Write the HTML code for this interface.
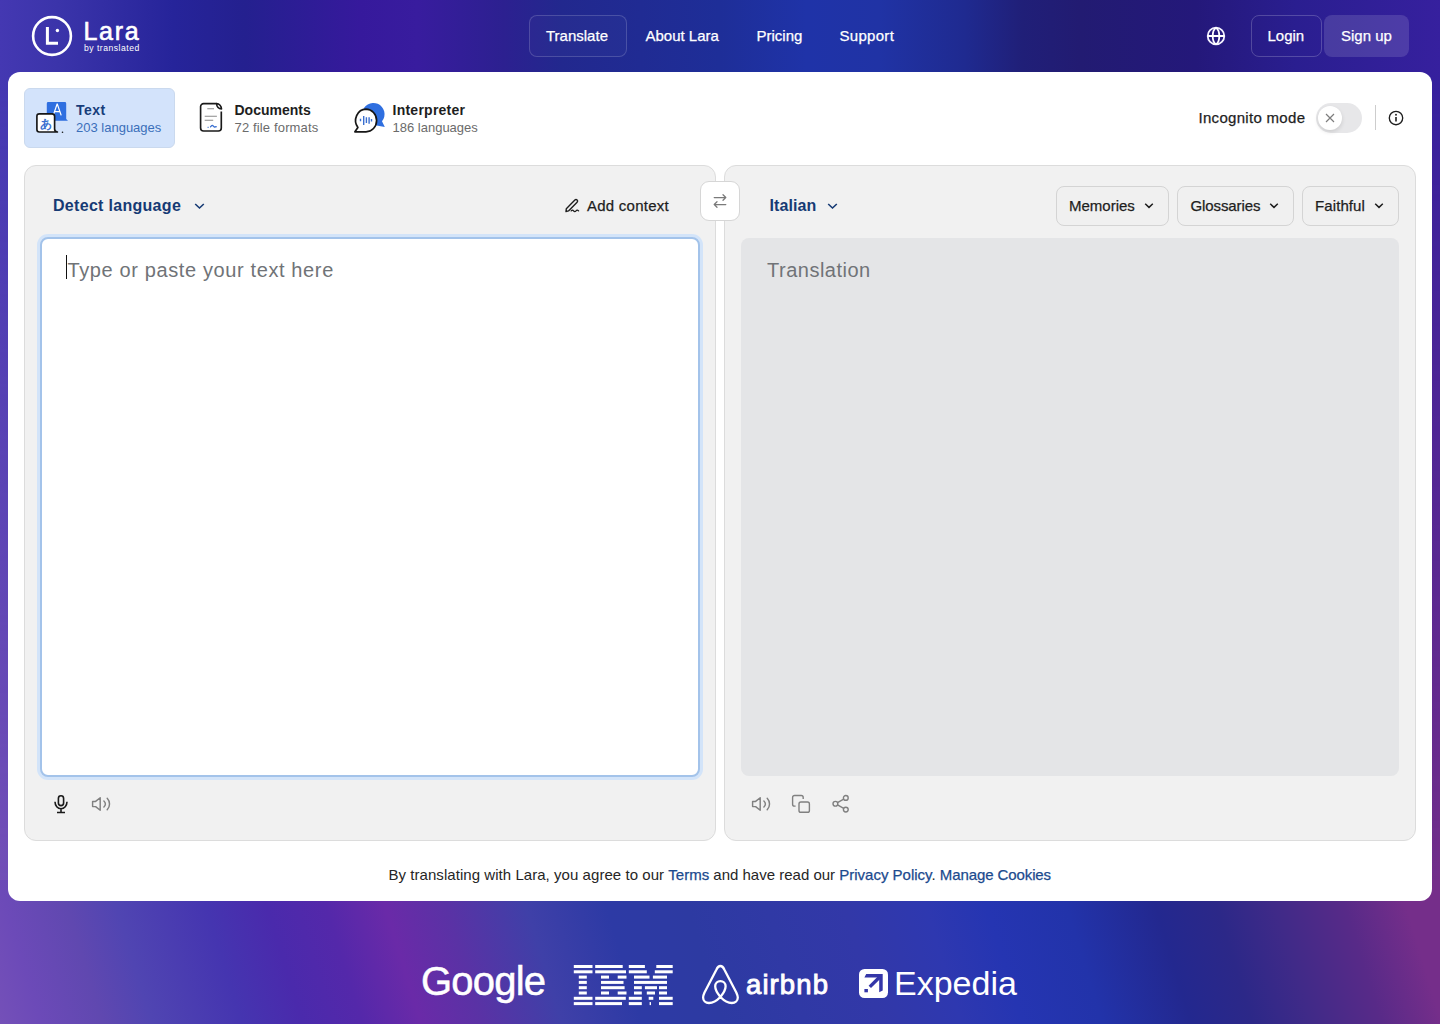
<!DOCTYPE html>
<html><head><meta charset="utf-8">
<style>
*{box-sizing:border-box;margin:0;padding:0}
html,body{width:1440px;height:1024px;overflow:hidden}
body{font-family:"Liberation Sans",sans-serif;position:relative;background:#3a2aa8}
.abs{position:absolute}
.t{position:absolute;white-space:nowrap;line-height:1}
.w{color:#fff}
.med{-webkit-text-stroke:0.25px currentColor}
.bgb{position:absolute;left:0;top:0;width:1440px;height:1024px;
 background:linear-gradient(90deg,#7450b8 0%,#6c4ab8 3%,#6048b0 7%,#5045b2 10%,#4535b0 17%,#4a2aac 21%,#5428aa 25%,#6a2aa8 29%,#5a32a5 33%,#3f40a8 39%,#2d3aa5 44%,#2d3aa2 50%,#3039a5 56%,#3238a8 61%,#2e38b0 67%,#2535b0 69%,#2235aa 75%,#23288f 81%,#342a8a 86%,#452a88 90%,#5a2a88 96%,#752e8a 100%)}
.bgt{position:absolute;left:0;top:0;width:1440px;height:1024px;
 background:linear-gradient(90deg,#4438b2 0%,#3b34aa 4%,#26249a 12%,#24208f 17%,#36199c 25%,#381c9e 29%,#2c2090 35%,#22288e 39%,#1e2e98 50%,#1f33a8 56%,#2033a5 61%,#1f2a90 67%,#201f78 71%,#221b72 75%,#24187a 83%,#2a1e90 90%,#36209e 100%);
 -webkit-mask-image:linear-gradient(180deg,#000 0px,#000 80px,rgba(0,0,0,0) 900px)}
.card{position:absolute;left:8px;top:72px;width:1424px;height:829px;background:#fff;border-radius:12px}
.panel{position:absolute;top:165px;width:692px;height:676px;background:#f1f1f1;border:1px solid #dcdcdc;border-radius:12px}
.btn{position:absolute;top:186px;height:40px;border:1px solid #d4d4d4;border-radius:8px;background:#f0f0f0}
.ic{position:absolute;overflow:visible}
</style></head>
<body>
<div class="bgb"></div>
<div class="bgt"></div>
<div style="position:absolute;left:0;top:880px;width:1440px;height:144px;background:linear-gradient(73deg,#7450b8 0.1%,#6c4ab8 2.8%,#6048b0 6.9%,#5045b2 10.3%,#4535b0 16.3%,#4a2aac 20.4%,#5428aa 24.4%,#6a2aa8 28.4%,#5a32a5 32.5%,#3f40a8 37.9%,#2d3aa5 43.3%,#2d3aa2 48.7%,#3039a5 54.1%,#3238a8 59.4%,#2e38b0 64.8%,#2535b2 68.9%,#2233aa 74.3%,#23288f 80.3%,#2c2888 84.4%,#402a88 88.4%,#582a88 93.1%,#752e8a 97.2%)"></div>

<!-- header -->
<svg class="ic" style="left:31px;top:15px" width="42" height="42" viewBox="0 0 42 42">
  <circle cx="21" cy="21" r="18.9" fill="none" stroke="#fff" stroke-width="2.6"/>
  <path d="M16.4 12v16.3h10.6" fill="none" stroke="#fff" stroke-width="3"/>
  <circle cx="26.4" cy="15.5" r="1.7" fill="#fff"/>
</svg>
<div class="t w" style="left:83.5px;top:19px;font-size:25px;letter-spacing:1.7px;-webkit-text-stroke:0.6px #fff">Lara</div>
<div class="t w" style="left:84px;top:43.5px;font-size:8.6px;letter-spacing:0.5px">by translated</div>

<div class="abs" style="left:529px;top:15px;width:98px;height:42px;border:1px solid rgba(255,255,255,0.17);border-radius:8px;background:rgba(255,255,255,0.02)"></div>
<div class="t w med" style="left:546px;top:28px;font-size:15px">Translate</div>
<div class="t w med" style="left:645.5px;top:28px;font-size:15px">About Lara</div>
<div class="t w med" style="left:756.5px;top:28px;font-size:15px">Pricing</div>
<div class="t w med" style="left:839.5px;top:28px;font-size:15px;letter-spacing:0.3px">Support</div>

<svg class="ic" style="left:1206px;top:26px" width="20" height="20" viewBox="0 0 20 20">
  <circle cx="10" cy="10" r="8.3" fill="none" stroke="#f4f2ff" stroke-width="1.8"/>
  <path d="M10 1.7C5.6 4.5 5.6 15.5 10 18.3M10 1.7C14.4 4.5 14.4 15.5 10 18.3M1.7 10h16.6" fill="none" stroke="#fff" stroke-width="1.8"/>
</svg>
<div class="abs" style="left:1251px;top:15px;width:71px;height:42px;border:1px solid rgba(255,255,255,0.2);border-radius:8px"></div>
<div class="t w med" style="left:1267.5px;top:28.4px;font-size:15px">Login</div>
<div class="abs" style="left:1324px;top:15px;width:85px;height:42px;border-radius:8px;background:rgba(255,255,255,0.13)"></div>
<div class="t w med" style="left:1341px;top:28.4px;font-size:15px">Sign up</div>

<!-- card -->
<div class="card"></div>

<!-- tabs -->
<div class="abs" style="left:24px;top:88px;width:151px;height:60px;border-radius:6px;background:#d3e3fb;border:1px solid #cad9ee"></div>
<svg class="ic" style="left:36px;top:102px" width="34" height="32" viewBox="0 0 34 32">
  <path d="M12.2 0h16.6a1.4 1.4 0 0 1 1.4 1.4v15.6l1.8 1.8H12.2a1.4 1.4 0 0 1-1.4-1.4V1.4A1.4 1.4 0 0 1 12.2 0z" fill="#2f6fe0"/>
  <path d="M17.2 13.4l3.9-11.3h0.2l3.9 11.3M18.5 9.7h5.4" fill="none" stroke="#fff" stroke-width="1.25"/>
  <path d="M3.4 11.8h12.7a2.5 2.5 0 0 1 2.5 2.5V27c0 1.5 1 2.6 2.8 3H3.4a2.5 2.5 0 0 1-2.5-2.5V14.3a2.5 2.5 0 0 1 2.5-2.5z" fill="#fff" stroke="#161616" stroke-width="1.65" stroke-linejoin="round"/>
  <circle cx="26.5" cy="30.3" r="0.8" fill="#161616"/>
  <text x="10.2" y="26.2" font-size="12" font-weight="700" fill="#3a6fd0" text-anchor="middle">あ</text>
</svg>
<div class="t" style="left:76px;top:102.8px;font-size:14px;font-weight:700;color:#173d7a;letter-spacing:0.5px">Text</div>
<div class="t" style="left:76px;top:120.9px;font-size:13px;color:#3b6fba">203 languages</div>

<svg class="ic" style="left:199px;top:102px" width="25" height="31" viewBox="0 0 25 31">
  <path d="M17.6 1.6H4.6a3 3 0 0 0-3 3V26a3 3 0 0 0 3 3h14.7a3 3 0 0 0 3-3V9.5" fill="none" stroke="#1a1a1a" stroke-width="1.65"/>
  <path d="M17.6 1.6c2.6 0 4.9 2.6 4.9 5.3-2.7 0-4.9-2.1-4.9-5.3z" fill="none" stroke="#1a1a1a" stroke-width="1.65" stroke-linejoin="round"/>
  <path d="M8.3 6.8h6.7M5.7 14.2h12.2M5.7 18.3h8.5" stroke="#8a8a8a" stroke-width="1.1"/>
  <path d="M8.6 25.3h1M11 25.2c1-0.2 1.4-1.9 2.3-1.9s1.2 1.7 2.1 1.7 1.2-0.6 2.3-0.1" fill="none" stroke="#3a6fd0" stroke-width="1.3"/>
</svg>
<div class="t" style="left:234.5px;top:102.8px;font-size:14px;font-weight:700;color:#1e1e1e">Documents</div>
<div class="t" style="left:234.5px;top:120.8px;font-size:13px;color:#6b6b6b;letter-spacing:0.15px">72 file formats</div>

<svg class="ic" style="left:353px;top:103px" width="34" height="31" viewBox="0 0 34 31">
  <path d="M29 18.3A11.2 11.2 0 1 0 22.3 22.2L31.8 24z" fill="#2f6fe0"/>
  <path d="M13 6.2a10.6 11.3 0 1 1 0 22.6H1.9l3-4.3A10.6 11.3 0 0 1 13 6.2z" fill="#fff" stroke="#161616" stroke-width="1.7" stroke-linejoin="round"/>
  <path d="M7.5 15.8v2.5M10.7 13.1v8.8M13.4 14.2v5.8M16.1 14.2v6.5M18.5 16.1v2.4" stroke="#3a6fd0" stroke-width="1.4"/>
</svg>
<div class="t" style="left:392.5px;top:102.8px;font-size:14px;font-weight:700;color:#1e1e1e;letter-spacing:0.25px">Interpreter</div>
<div class="t" style="left:392.5px;top:120.8px;font-size:13px;color:#6b6b6b">186 languages</div>

<!-- incognito -->
<div class="t med" style="left:1198.5px;top:110px;font-size:15px;color:#1e1e1e;letter-spacing:0.3px">Incognito mode</div>
<div class="abs" style="left:1316px;top:103px;width:46px;height:30px;border-radius:15px;background:#e7e7e9"></div>
<div class="abs" style="left:1318px;top:106px;width:24px;height:24px;border-radius:12px;background:#fff;box-shadow:0 2px 4px rgba(0,0,0,0.12)"></div>
<svg class="ic" style="left:1325px;top:113px" width="10" height="10" viewBox="0 0 10 10"><path d="M1 1l8 8M9 1l-8 8" stroke="#7d7d7d" stroke-width="1.15"/></svg>
<div class="abs" style="left:1374.5px;top:105px;width:1.6px;height:25px;background:#cdcdcd"></div>
<svg class="ic" style="left:1388px;top:110px" width="16" height="16" viewBox="0 0 16 16">
  <circle cx="8" cy="8" r="6.7" fill="none" stroke="#1e1e1e" stroke-width="1.35"/>
  <path d="M8 7v4.5" stroke="#1e1e1e" stroke-width="1.6"/><circle cx="8" cy="4.7" r="0.95" fill="#1e1e1e"/>
</svg>

<!-- panels -->
<div class="panel" style="left:24px"></div>
<div class="panel" style="left:724px"></div>

<div class="abs" style="left:700px;top:181px;width:40px;height:40px;border:1px solid #d6d6d6;border-radius:9px;background:#fff"></div>
<svg class="ic" style="left:712px;top:193px" width="16" height="16" viewBox="0 0 16 16">
  <path d="M2.2 4.5h11.6M11 1.7l2.8 2.8-2.8 2.8M13.8 11.5H2.2M5 8.7l-2.8 2.8 2.8 2.8" fill="none" stroke="#7a7a7a" stroke-width="1.25" stroke-linecap="round" stroke-linejoin="round"/>
</svg>

<div class="t" style="left:53px;top:198.1px;font-size:16px;font-weight:700;color:#163a74;letter-spacing:0.3px">Detect language</div>
<svg class="ic" style="left:193.5px;top:201.5px" width="11" height="8" viewBox="0 0 11 8"><path d="M1.2 2l4.3 4 4.3-4" fill="none" stroke="#163a74" stroke-width="1.6"/></svg>

<svg class="ic" style="left:564px;top:198px" width="16" height="15" viewBox="0 0 16 15">
  <path d="M2 13.5l0.3-2.8 8.6-8.6a1.5 1.5 0 0 1 2.2 2.2l-8.6 8.6z" fill="none" stroke="#1e1e1e" stroke-width="1.4" stroke-linejoin="round"/>
  <path d="M7.2 12.9c0.9-1.1 1.7-1.1 2.4-0.1s1.6 1 2.4 0 1.6-0.9 2.6 0.1" fill="none" stroke="#1e1e1e" stroke-width="1.3" stroke-linecap="round"/>
</svg>
<div class="t med" style="left:587px;top:198.05px;font-size:15px;color:#1e1e1e;letter-spacing:0.25px">Add context</div>

<div class="abs" style="left:40px;top:237px;width:660px;height:540px;background:#fff;border:2px solid #a3c3ea;border-radius:8px;box-shadow:0 0 0 3px #d3e4f9"></div>
<div class="abs" style="left:66px;top:255px;width:1.3px;height:24px;background:#111"></div>
<div class="t" style="left:67.5px;top:260px;font-size:20px;color:#707377;letter-spacing:0.62px">Type or paste your text here</div>

<svg class="ic" style="left:52px;top:794px" width="18" height="20" viewBox="0 0 18 20">
  <rect x="6.4" y="1.8" width="5.2" height="9.8" rx="2.6" fill="none" stroke="#1a1a1a" stroke-width="1.6"/>
  <path d="M3 7.8a6 6.9 0 0 0 12 0M9 14.7v3.6M5 18.5h8" fill="none" stroke="#1a1a1a" stroke-width="1.6"/>
</svg>
<svg class="ic" style="left:91px;top:796px" width="20" height="16" viewBox="0 0 20 16">
  <path d="M1.6 5.4h3l4.6-3.7v12.6l-4.6-3.7h-3z" fill="none" stroke="#808080" stroke-width="1.45" stroke-linejoin="round"/>
  <path d="M12.9 5c2 1.8 2 4.2 0 6M16.2 2.2c3.1 3.3 3.1 8.3 0 11.6" fill="none" stroke="#808080" stroke-width="1.45" stroke-linecap="round"/>
</svg>

<!-- right panel -->
<div class="t" style="left:769.5px;top:198.1px;font-size:16px;font-weight:700;color:#163a74;letter-spacing:0.1px">Italian</div>
<svg class="ic" style="left:827px;top:202px" width="11" height="8" viewBox="0 0 11 8"><path d="M1.2 2l4.3 4 4.3-4" fill="none" stroke="#163a74" stroke-width="1.6"/></svg>

<div class="btn" style="left:1056px;width:113px"></div>
<div class="t med" style="left:1069px;top:197.8px;font-size:15px;color:#1e1e1e">Memories</div>
<svg class="ic" style="left:1144px;top:202px" width="10" height="7" viewBox="0 0 10 7"><path d="M1.2 1.8l3.8 3.6 3.8-3.6" fill="none" stroke="#1e1e1e" stroke-width="1.5"/></svg>
<div class="btn" style="left:1177px;width:117px"></div>
<div class="t med" style="left:1190.5px;top:197.8px;font-size:15px;color:#1e1e1e;letter-spacing:-0.1px">Glossaries</div>
<svg class="ic" style="left:1269px;top:202px" width="10" height="7" viewBox="0 0 10 7"><path d="M1.2 1.8l3.8 3.6 3.8-3.6" fill="none" stroke="#1e1e1e" stroke-width="1.5"/></svg>
<div class="btn" style="left:1302px;width:97px"></div>
<div class="t med" style="left:1315px;top:197.8px;font-size:15px;color:#1e1e1e;letter-spacing:0.1px">Faithful</div>
<svg class="ic" style="left:1374px;top:202px" width="10" height="7" viewBox="0 0 10 7"><path d="M1.2 1.8l3.8 3.6 3.8-3.6" fill="none" stroke="#1e1e1e" stroke-width="1.5"/></svg>

<div class="abs" style="left:741px;top:238px;width:658px;height:538px;background:#e4e5e7;border-radius:8px"></div>
<div class="t" style="left:767px;top:260.1px;font-size:20px;color:#707377;letter-spacing:0.5px">Translation</div>

<svg class="ic" style="left:751px;top:796px" width="20" height="16" viewBox="0 0 20 16">
  <path d="M1.6 5.4h3l4.6-3.7v12.6l-4.6-3.7h-3z" fill="none" stroke="#808080" stroke-width="1.45" stroke-linejoin="round"/>
  <path d="M12.9 5c2 1.8 2 4.2 0 6M16.2 2.2c3.1 3.3 3.1 8.3 0 11.6" fill="none" stroke="#808080" stroke-width="1.45" stroke-linecap="round"/>
</svg>
<svg class="ic" style="left:791px;top:794px" width="20" height="20" viewBox="0 0 20 20">
  <path d="M4.6 12.1H3.5a1.9 1.9 0 0 1-1.9-1.9V3.4a1.9 1.9 0 0 1 1.9-1.9h6.8a1.9 1.9 0 0 1 1.9 1.9v1.5" fill="none" stroke="#808080" stroke-width="1.4"/>
  <rect x="8" y="8" width="10.4" height="10.3" rx="1.9" fill="none" stroke="#808080" stroke-width="1.4"/>
</svg>
<svg class="ic" style="left:831px;top:794px" width="20" height="20" viewBox="0 0 20 20">
  <circle cx="14.8" cy="3.9" r="2.4" fill="none" stroke="#808080" stroke-width="1.4"/>
  <circle cx="4.4" cy="9.75" r="2.4" fill="none" stroke="#808080" stroke-width="1.4"/>
  <circle cx="14.8" cy="15.6" r="2.4" fill="none" stroke="#808080" stroke-width="1.4"/>
  <path d="M6.5 8.6l6.2-3.5M6.5 10.9l6.2 3.5" stroke="#808080" stroke-width="1.4"/>
</svg>

<!-- footer -->
<div class="t" style="left:388.5px;top:867.3px;font-size:15px;color:#262626"><span style="letter-spacing:0.05px">By translating with Lara, you agree to our </span><span style="color:#1b4a8e" class="med">Terms</span> and have read our <span style="color:#1b4a8e" class="med">Privacy Policy</span>. <span style="color:#1b4a8e;letter-spacing:-0.1px" class="med">Manage Cookies</span></div>

<!-- logos -->
<div class="t w" style="left:421px;top:961px;font-size:40px;letter-spacing:-0.8px;-webkit-text-stroke:0.5px #fff">Google</div>
<svg class="ic" style="left:570px;top:965px" width="106" height="41" viewBox="0 0 106 41"><g fill="#fff"><rect x="3.8" y="0.0" width="18.7" height="3"/><rect x="25.2" y="0.0" width="27.5" height="3"/><rect x="58.8" y="0.0" width="16.1" height="3"/><rect x="86.3" y="0.0" width="16.4" height="3"/><rect x="3.8" y="5.3" width="18.7" height="3"/><rect x="25.2" y="5.3" width="30.8" height="3"/><rect x="58.8" y="5.3" width="18.0" height="3"/><rect x="84.8" y="5.3" width="17.9" height="3"/><rect x="8.8" y="10.6" width="8.0" height="3"/><rect x="31" y="10.6" width="8" height="3"/><rect x="47.7" y="10.6" width="8.8" height="3"/><rect x="64" y="10.6" width="15.5" height="3"/><rect x="82.9" y="10.6" width="14.1" height="3"/><rect x="8.8" y="15.9" width="8.0" height="3"/><rect x="31" y="15.9" width="22.5" height="3"/><rect x="64" y="15.9" width="33" height="3"/><rect x="8.8" y="21.2" width="8.0" height="3"/><rect x="31" y="21.2" width="23.6" height="3"/><rect x="64" y="21.2" width="7.8" height="3"/><rect x="74.9" y="21.2" width="12.1" height="3"/><rect x="89" y="21.2" width="8" height="3"/><rect x="8.8" y="26.5" width="8.0" height="3"/><rect x="31" y="26.5" width="8" height="3"/><rect x="47.7" y="26.5" width="8.8" height="3"/><rect x="64" y="26.5" width="7.8" height="3"/><rect x="76.8" y="26.5" width="8.2" height="3"/><rect x="89" y="26.5" width="8" height="3"/><rect x="3.8" y="31.8" width="18.7" height="3"/><rect x="25.2" y="31.8" width="30.6" height="3"/><rect x="58.8" y="31.8" width="13.0" height="3"/><rect x="78.7" y="31.8" width="4.6" height="3"/><rect x="89" y="31.8" width="13.7" height="3"/><rect x="3.8" y="37.1" width="18.7" height="3"/><rect x="25.2" y="37.1" width="26.8" height="3"/><rect x="58.8" y="37.1" width="13.0" height="3"/><rect x="79.6" y="37.1" width="1.4" height="3"/><rect x="89" y="37.1" width="13.7" height="3"/></g></svg>
<svg class="ic" style="left:700px;top:962px" width="42" height="44" viewBox="0 0 42 44">
  <path d="M20.4 35C17 38.5 13 41 9 41C5.5 41 3.1 38.5 3.1 35.5C3.1 34 3.6 32.5 4.5 30.5L16.5 7.5C17.5 5.2 18.8 4 20.4 4C22 4 23.3 5.2 24.3 7.5L36.3 30.5C37.2 32.5 37.8 34 37.8 35.5C37.8 38.5 35.3 41 31.8 41C27.8 41 23.8 38.5 20.4 35C17.5 31.5 15.2 27 15.2 24.3C15.2 21.2 17.5 19.1 20.4 19.1C23.3 19.1 25.6 21.2 25.6 24.3C25.6 27 23.3 31.5 20.4 35z" fill="none" stroke="#fff" stroke-width="2.3" stroke-linejoin="round"/>
</svg>
<div class="t w" style="left:746px;top:970.5px;font-size:27.5px;letter-spacing:1.1px;-webkit-text-stroke:0.9px #fff">airbnb</div>
<svg class="ic" style="left:859px;top:969px" width="29" height="29" viewBox="0 0 29 29">
  <rect x="0" y="0" width="29" height="29" rx="5.5" fill="#fff"/>
  <path d="M7.2 5H23.7V21.6L20.2 23.3V8.5H5.4z" fill="#3436a8"/>
  <path d="M20.5 8.2L10.8 17.9" stroke="#3436a8" stroke-width="3.4"/>
  <rect x="5.4" y="20" width="3.5" height="3.3" fill="#3436a8"/>
</svg>
<div class="t w" style="left:894px;top:965.6px;font-size:34px;letter-spacing:0px">Expedia</div>

</body></html>
